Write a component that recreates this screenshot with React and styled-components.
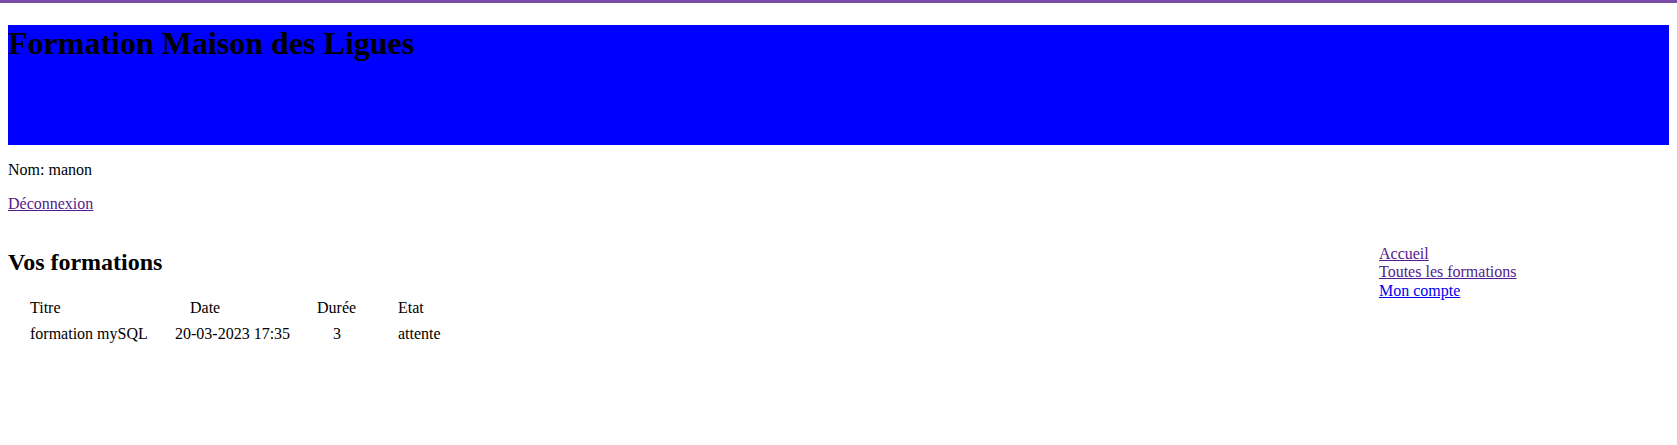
import React from "react";
import styled, { createGlobalStyle } from "styled-components";

const Global = createGlobalStyle`
  html {
    border-top: 3px solid #7a4ca5;
    background: #ffffff;
  }
  body {
    margin: 22px 8px 8px 8px;
    font-family: "Liberation Serif", "Times New Roman", serif;
    font-size: 16px;
    color: #000000;
  }
`;

const Header = styled.header`
  height: 120px;
  margin-right: -3px;
  background: #0000ff;
`;

const Title = styled.h1`
  margin: 0;
  font-size: 32px;
  font-weight: bold;
  line-height: normal;
`;

const Para = styled.p`
  margin: 16px 0;
  line-height: normal;
`;

const Link = styled.a`
  color: ${(p) => (p.$visited ? "#551a8b" : "#0000ee")};
  text-decoration: underline;
  cursor: pointer;
`;

const Content = styled.div`
  display: flex;
  align-items: flex-start;
`;

const Main = styled.main`
  flex: 1;
`;

const SectionTitle = styled.h2`
  margin: 20px 0 20px 0;
  font-size: 24px;
  font-weight: bold;
  line-height: normal;
`;

const Table = styled.div`
  display: grid;
  grid-template-columns: 145px 142px 81px auto;
  grid-auto-rows: 26px;
  padding-left: 22px;
  padding-top: 3px;
`;

const Cell = styled.div`
  padding-left: ${(p) => p.$indent || 0}px;
  line-height: 18px;
  white-space: nowrap;
`;

const Aside = styled.aside`
  width: 330px;
`;

const NavList = styled.ul`
  list-style: none;
  margin: 16px 0;
  padding-left: 40px;
`;

const NavItem = styled.li`
  line-height: 18.4px;
`;

const rows = [
  { titre: "formation mySQL", date: "20-03-2023 17:35", duree: "3", etat: "attente" },
];

export default function App() {
  return (
    <>
      <Global />
      <Header>
        <Title>Formation Maison des Ligues</Title>
      </Header>
      <Para>Nom: manon</Para>
      <Para>
        <Link $visited href="#">Déconnexion</Link>
      </Para>
      <Content>
        <Main>
          <SectionTitle>Vos formations</SectionTitle>
          <Table>
            <Cell>Titre</Cell>
            <Cell $indent={15}>Date</Cell>
            <Cell>Durée</Cell>
            <Cell>Etat</Cell>
            {rows.map((r) => (
              <React.Fragment key={r.titre}>
                <Cell>{r.titre}</Cell>
                <Cell>{r.date}</Cell>
                <Cell $indent={16}>{r.duree}</Cell>
                <Cell>{r.etat}</Cell>
              </React.Fragment>
            ))}
          </Table>
        </Main>
        <Aside>
          <NavList>
            <NavItem><Link $visited href="#">Accueil</Link></NavItem>
            <NavItem><Link $visited href="#">Toutes les formations</Link></NavItem>
            <NavItem><Link href="#">Mon compte</Link></NavItem>
          </NavList>
        </Aside>
      </Content>
    </>
  );
}
